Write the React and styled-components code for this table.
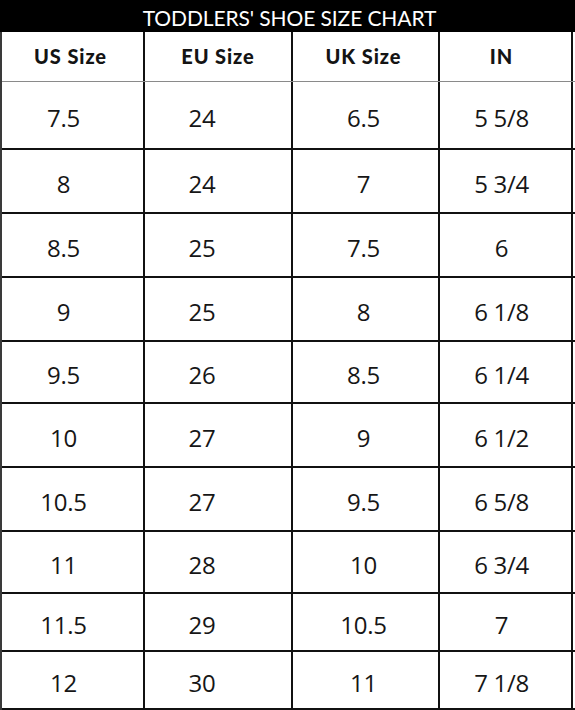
import React from "react";
import styled, { createGlobalStyle } from "styled-components";

const GlobalStyle = createGlobalStyle`
    * { box-sizing: border-box; }
    body {
        margin: 0;
        background: #fff;
        font-family: "Open Sans", "Liberation Sans", sans-serif;
    }
`;

const Chart = styled.div`
    width: 575px;
    height: 710px;
    display: flex;
    flex-direction: column;
    background: #fff;
`;

const Banner = styled.div`
    height: 32px;
    background: #000;
    color: #fff;
    display: flex;
    align-items: center;
    justify-content: center;
    font-family: "Lato", "Liberation Sans", sans-serif;
    font-size: 21px;
    font-weight: 400;
    letter-spacing: -0.1px;
    padding-top: 2px;
    padding-left: 4px;
`;

const Table = styled.div`
    display: flex;
    flex-direction: column;
    border-left: 2px solid #3a3a3a;
`;

const Row = styled.div`
    display: grid;
    grid-template-columns: 143px 148px 147px 133px;
    height: ${(p) => p.$h}px;
    border-bottom: ${(p) => (p.$head ? "1px solid #8a8a8a" : "2px solid #111")};
`;

const Cell = styled.div`
    display: flex;
    align-items: center;
    justify-content: center;
    border-right: 2px solid #111;
    padding-right: ${(p) => p.$shift || 0}px;
    padding-top: ${(p) => (p.$head ? 0 : 4)}px;
    color: #161616;
    font-size: 24px;
    font-weight: 500;
    letter-spacing: -0.3px;
`;

const HeadCell = styled(Cell)`
    font-family: "Lato", "Liberation Sans", sans-serif;
    font-weight: 900;
    font-size: 20px;
    letter-spacing: 0.9px;
    color: #141414;
    padding-bottom: 2px;
`;

const heads = ["US Size", "EU Size", "UK Size", "IN"];
const headShift = [4, 0, 4, 8];
const dataShift = [18, 32, 4, 8];

const rows = [
    { h: 68, v: ["7.5", "24", "6.5", "5 5/8"] },
    { h: 64, v: ["8", "24", "7", "5 3/4"] },
    { h: 64, v: ["8.5", "25", "7.5", "6"] },
    { h: 64, v: ["9", "25", "8", "6 1/8"] },
    { h: 62, v: ["9.5", "26", "8.5", "6 1/4"] },
    { h: 64, v: ["10", "27", "9", "6 1/2"] },
    { h: 64, v: ["10.5", "27", "9.5", "6 5/8"] },
    { h: 62, v: ["11", "28", "10", "6 3/4"] },
    { h: 58, v: ["11.5", "29", "10.5", "7"] },
    { h: 58, v: ["12", "30", "11", "7 1/8"] },
];

export default function App() {
    return (
        <Chart>
            <GlobalStyle />
            <Banner>TODDLERS' SHOE SIZE CHART</Banner>
            <Table>
                <Row $h={50} $head>
                    {heads.map((t, i) => (
                        <HeadCell key={t} $head $shift={headShift[i]}>{t}</HeadCell>
                    ))}
                </Row>
                {rows.map((r, idx) => (
                    <Row key={idx} $h={r.h}>
                        {r.v.map((t, i) => (
                            <Cell key={i} $shift={dataShift[i]}>{t}</Cell>
                        ))}
                    </Row>
                ))}
            </Table>
        </Chart>
    );
}
